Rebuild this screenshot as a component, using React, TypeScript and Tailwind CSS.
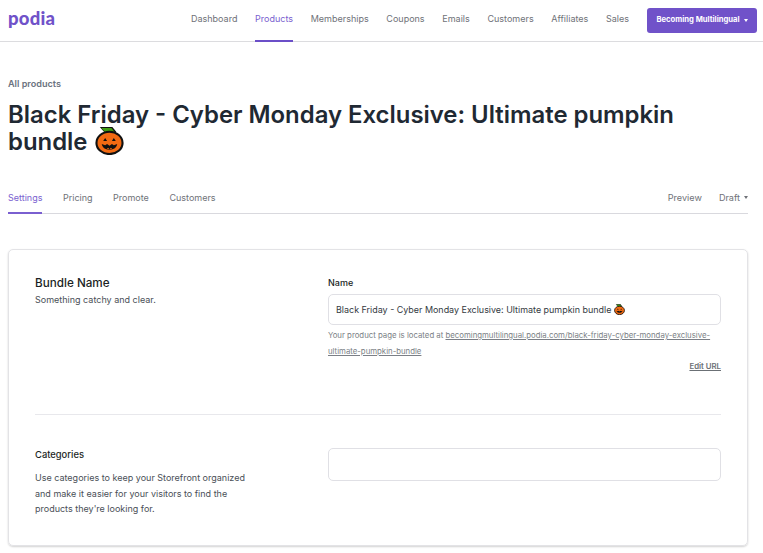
const Pumpkin = ({ size, className }: { size: number; className: string }) => (
  <svg width={size} height={size} viewBox="0 0 30 30" className={className}>
    <path d="M5 1h13l4 5-2 3h-8z" fill="#111" />
    <path d="M6.500 2h10.500l3.500 4.500-10 0z" fill="#3f9c14" />
    <ellipse cx="15" cy="17.500" rx="13.500" ry="11.500" fill="#f26a12" stroke="#111" strokeWidth="2.200" />
    <path d="M8.500 15.500l2-3 2 3zM17.500 15.500l2-3 2 3z" fill="#111" />
    <path d="M7 18.500l3.500 1.500 2-1.500 2.500 2 2.500-2 2 1.500 3.500-1.500c-.5 3.500-3.500 6-8 6s-7.500-2.500-8-6z" fill="#111" />
    <path d="M12 24l1.500-1.500 1.500 1.500 1.500-1.500 1.500 1.500z" fill="#f26a12" />
  </svg>
);

const navLinks = ["Dashboard", "Products", "Memberships", "Coupons", "Emails", "Customers", "Affiliates", "Sales"];
const tabs = ["Settings", "Pricing", "Promote", "Customers"];

export default function App() {
  return (
    <div className="min-h-[553px] bg-white font-['Inter',sans-serif] text-[#1f2933] overflow-hidden">
      <header className="h-[42px] flex items-center justify-between border-b border-[#dcdcdf] pl-2 pr-[6px]">
        <span className="text-[#7052c9] text-[18.500px] font-black font-['Lato',sans-serif] tracking-[0.2px] leading-none -mt-[4px]">podia</span>
        <nav className="flex items-center h-full">
          <div className="flex gap-[17.700px] h-full mr-[18px]">
            {navLinks.map((l) => (
              <a
                key={l}
                className={
                  l === "Products"
                    ? "flex items-center h-[42px] border-y-2 border-t-transparent pb-[4px] text-[9px] text-[#7a5fd0] border-b-[#6b4fc8]"
                    : "flex items-center h-[42px] border-y-2 border-transparent pb-[4px] text-[9px] text-[#6f7278]"
                }
              >
                {l}
              </a>
            ))}
          </div>
          <button className="w-[110px] h-[25px] -mt-[1px] rounded-[3px] bg-[#7052c9] text-white text-[7.650px] font-bold flex items-center justify-center gap-[4px]">
            Becoming Multilingual
            <span className="w-0 h-0 border-x-[2.500px] border-x-transparent border-t-[3px] border-t-white" />
          </button>
        </nav>
      </header>

      <main className="px-2">
        <div className="pt-[35px] text-[9.100px] font-semibold leading-[14px] text-[#6b7380]">All products</div>
        <h1 className="mt-[10px] text-[23.900px] font-semibold leading-[27px] text-[#1f2933]">
          Black Friday - Cyber Monday Exclusive: Ultimate pumpkin bundle
          <Pumpkin size={29} className="inline-block align-top ml-[8px] -mt-[2px]" />
        </h1>

        <div className="mt-[28px] h-[31px] flex justify-between border-b border-[#d9d9de] w-[740px]">
          <div className="flex gap-[20.500px] h-[31px]">
            {tabs.map((t) => (
              <a
                key={t}
                className={
                  t === "Settings"
                    ? "flex items-center h-[31px] border-y-2 border-t-transparent pb-[2px] text-[9px] text-[#7a5fd0] border-b-[#7a5fd0]"
                    : "flex items-center h-[31px] border-y-2 border-transparent pb-[2px] text-[9px] text-[#6f7278]"
                }
              >
                {t}
              </a>
            ))}
          </div>
          <div className="flex items-center gap-[17px] h-[31px] pb-[2px] text-[9.100px] text-[#6f7278]">
            <span>Preview</span>
            <span className="flex items-center gap-[4px]">
              Draft
              <span className="w-0 h-0 border-x-[2.500px] border-x-transparent border-t-[3px] border-t-[#6f7278]" />
            </span>
          </div>
        </div>

        <section className="mt-[35px] w-[740px] h-[297px] rounded-[5px] border border-[#e3e3e6] shadow-[0_1px_2px_rgba(0,0,0,0.18)] px-[26px] pt-[25px]">
          <div className="flex h-[140px] border-b border-[#e8e8ec]">
            <div className="w-[293px]">
              <div className="text-[11.700px] font-medium leading-[16px] text-[#1b1f24]">Bundle Name</div>
              <div className="mt-[1px] text-[9px] leading-[16px] text-[#4a4f57]">Something catchy and clear.</div>
            </div>
            <div className="flex-1">
              <div className="text-[9px] font-medium leading-[16px] text-[#1b1f24]">Name</div>
              <div className="mt-[3px] h-[31px] rounded-[5px] border border-[#e0e0e5] flex items-center px-[7px] text-[8.950px] text-[#333a42]">
                <span className="flex items-center gap-[3px]">Black Friday - Cyber Monday Exclusive: Ultimate pumpkin bundle <Pumpkin size={11} className="block" /></span>
              </div>
              <div className="mt-[2px] text-[7.800px] leading-[16px] text-[#7b7f86]">
                Your product page is located at <span className="underline">becomingmultilingual.podia.com/black-friday-cyber-monday-exclusive-ultimate-pumpkin-bundle</span>
              </div>
              <div className="text-right text-[7.800px] font-semibold underline leading-[14px] text-[#6b7075]">Edit URL</div>
            </div>
          </div>
          <div className="flex pt-[33px]">
            <div className="w-[293px]">
              <div className="text-[9.400px] font-medium leading-[14px] text-[#1b1f24]">Categories</div>
              <div className="mt-[8px] w-[215px] text-[9px] leading-[15.500px] text-[#4a4f57]">
                Use categories to keep your Storefront organized and make it easier for your visitors to find the products they're looking for.
              </div>
            </div>
            <div className="flex-1">
              <div className="h-[33px] rounded-[5px] border border-[#e0e0e5]" />
            </div>
          </div>
        </section>
      </main>
    </div>
  );
}
